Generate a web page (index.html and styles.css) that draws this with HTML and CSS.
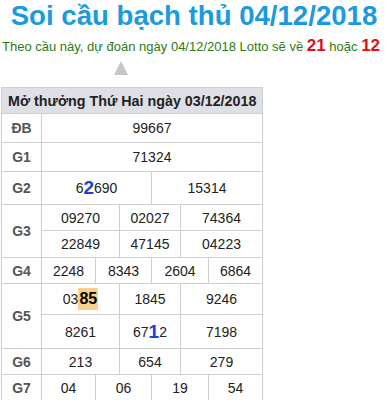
FILE: index.html
```html
<!DOCTYPE html>
<html lang="vi">
<head>
<meta charset="utf-8">
<title>Soi cầu bạch thủ 04/12/2018</title>
<link rel="stylesheet" href="styles.css">
</head>
<body>
<h1 class="title">Soi cầu bạch thủ 04/12/2018</h1>
<p class="predict">Theo cầu này, dự đoán ngày 04/12/2018 Lotto sẽ về <b class="red">21</b> hoặc <b class="red">12</b></p>
<div class="arrow"></div>
<div class="kq">
  <div class="head">Mở thưởng Thứ Hai ngày 03/12/2018</div>

  <div class="lbl r1">ĐB</div>
  <div class="c full">99667</div>

  <div class="lbl r1">G1</div>
  <div class="c full">71324</div>

  <div class="lbl r1">G2</div>
  <div class="c half1">6<b class="blue">2</b>690</div>
  <div class="c half2">15314</div>

  <div class="lbl r2">G3</div>
  <div class="c t1">09270</div>
  <div class="c t2">02027</div>
  <div class="c t3">74364</div>
  <div class="c t1">22849</div>
  <div class="c t2">47145</div>
  <div class="c t3">04223</div>

  <div class="lbl r1">G4</div>
  <div class="c q1">2248</div>
  <div class="c q2">8343</div>
  <div class="c q3">2604</div>
  <div class="c q4">6864</div>

  <div class="lbl r2">G5</div>
  <div class="c t1">03<b class="hl">85</b></div>
  <div class="c t2">1845</div>
  <div class="c t3">9246</div>
  <div class="c t1">8261</div>
  <div class="c t2">67<b class="blue">1</b>2</div>
  <div class="c t3">7198</div>

  <div class="lbl r1">G6</div>
  <div class="c t1">213</div>
  <div class="c t2">654</div>
  <div class="c t3">279</div>

  <div class="lbl r1">G7</div>
  <div class="c q1">04</div>
  <div class="c q2">06</div>
  <div class="c q3">19</div>
  <div class="c q4">54</div>
</div>
</body>
</html>
```

FILE: styles.css
```css
html, body {
  margin: 0;
  padding: 0;
  background: #fff;
}
body {
  font-family: "Liberation Sans", Arial, sans-serif;
  color: #333;
}
.title {
  margin: 0;
  font-size: 27.6px;
  line-height: 32px;
  font-weight: bold;
  color: #1b9ae0;
  text-align: center;
  padding-right: 4px;
}
.predict {
  margin: 4px 0 0 0;
  padding-left: 2px;
  font-size: 13px;
  line-height: 20px;
  color: #2c7a14;
  text-align: left;
  white-space: nowrap;
}
.red {
  color: #e01010;
  font-size: 17px;
}
.arrow {
  width: 0;
  height: 0;
  margin: 4px 0 0 114px;
  border-left: 7px solid transparent;
  border-right: 7px solid transparent;
  border-bottom: 14px solid #c6c6c6;
}
.kq {
  margin: 12px 0 0 1px;
  width: 262px;
  box-sizing: border-box;
  display: grid;
  grid-template-columns: 40px 54px 24px 32px 29px 28px 54px;
  grid-template-rows: 26px 29px 29px 33px 26px 27px 26px 31px 34px 26px 27px;
  border-top: 1px solid #cfcfcf;
  border-left: 1px solid #cfcfcf;
  font-size: 14px;
}
.kq > div {
  box-sizing: border-box;
  border-right: 1px solid #cfcfcf;
  border-bottom: 1px solid #cfcfcf;
  display: flex;
  align-items: center;
  justify-content: center;
  white-space: nowrap;
}
.kq > .head {
  grid-column: 1 / 8;
  justify-content: flex-start;
  padding-left: 6px;
  background: #dee0e6;
  font-weight: bold;
  font-size: 14.3px;
  color: #222;
}
.lbl {
  grid-column: 1;
  font-weight: bold;
  color: #555;
}
.r1 { grid-row: span 1; }
.r2 { grid-row: span 2; }
.full { grid-column: 2 / 8; }
.half1 { grid-column: 2 / 5; }
.half2 { grid-column: 5 / 8; }
.t1 { grid-column: 2 / 4; }
.t2 { grid-column: 4 / 6; }
.t3 { grid-column: 6 / 8; }
.q1 { grid-column: 2 / 3; }
.q2 { grid-column: 3 / 5; }
.q3 { grid-column: 5 / 7; }
.q4 { grid-column: 7 / 8; }
.c {
  color: #222;
}
.blue {
  color: #1f3fd6;
  font-size: 19px;
  line-height: 14px;
}
.hl {
  display: inline-block;
  background: #f8d28a;
  color: #000;
  font-size: 16px;
  line-height: 22px;
  padding: 0 1px;
}
```
